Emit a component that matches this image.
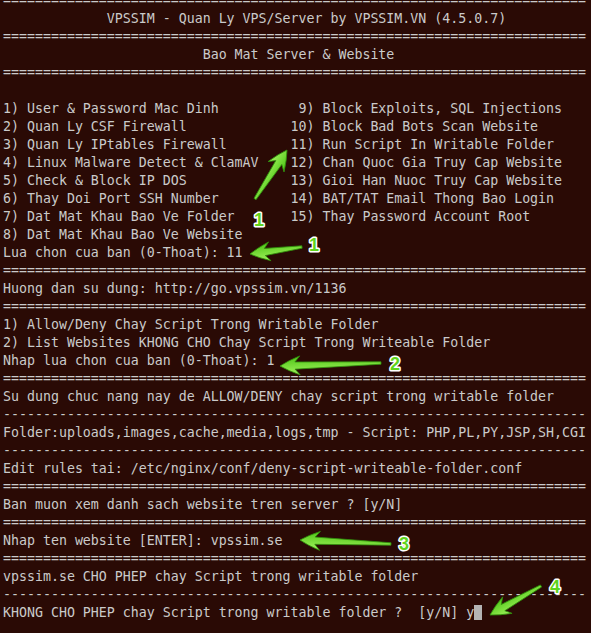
import React from "react";

const EQ = "=".repeat(73);
const DASH = "-".repeat(73);

const left = [
  "1) User & Password Mac Dinh",
  "2) Quan Ly CSF Firewall",
  "3) Quan Ly IPtables Firewall",
  "4) Linux Malware Detect & ClamAV",
  "5) Check & Block IP DOS",
  "6) Thay Doi Port SSH Number",
  "7) Dat Mat Khau Bao Ve Folder",
  "8) Dat Mat Khau Bao Ve Website",
];
const right = [
  " 9) Block Exploits, SQL Injections",
  "10) Block Bad Bots Scan Website",
  "11) Run Script In Writable Folder",
  "12) Chan Quoc Gia Truy Cap Website",
  "13) Gioi Han Nuoc Truy Cap Website",
  "14) BAT/TAT Email Thong Bao Login",
  "15) Thay Password Account Root",
];

const lines = [
  EQ,
  " ".repeat(13) + "VPSSIM - Quan Ly VPS/Server by VPSSIM.VN (4.5.0.7)",
  EQ,
  " ".repeat(25) + "Bao Mat Server & Website",
  EQ,
  "",
  ...left.map((l, i) => l.padEnd(36, " ") + (right[i] || "")),
  "Lua chon cua ban (0-Thoat): 11",
  EQ,
  "Huong dan su dung: http://go.vpssim.vn/1136",
  EQ,
  "1) Allow/Deny Chay Script Trong Writable Folder",
  "2) List Websites KHONG CHO Chay Script Trong Writeable Folder",
  "Nhap lua chon cua ban (0-Thoat): 1",
  EQ,
  "Su dung chuc nang nay de ALLOW/DENY chay script trong writable folder",
  DASH,
  "Folder:uploads,images,cache,media,logs,tmp - Script: PHP,PL,PY,JSP,SH,CGI",
  DASH,
  "Edit rules tai: /etc/nginx/conf/deny-script-writeable-folder.conf",
  EQ,
  "Ban muon xem danh sach website tren server ? [y/N]",
  EQ,
  "Nhap ten website [ENTER]: vpssim.se",
  EQ,
  "vpssim.se CHO PHEP chay Script trong writable folder",
  DASH,
  "KHONG CHO PHEP chay Script trong writable folder ?  [y/N] y",
  "",
];

function Arrow({ x1, y1, x2, y2 }) {
  const dx = x2 - x1;
  const dy = y2 - y1;
  const L = Math.sqrt(dx * dx + dy * dy);
  const a = (Math.atan2(dy, dx) * 180) / Math.PI;
  const d = `M 0 -1.2 L ${L - 15} -3.6 L ${L - 20} -9.5 Q ${L - 8} -5 ${L} 0 Q ${L - 8} 5 ${L - 20} 9.5 L ${L - 15} 3.6 L 0 1.2 Z`;
  return (
    <path
      d={d}
      transform={`translate(${x1} ${y1}) rotate(${a})`}
      fill="url(#ag)"
      stroke="#2f8d0b"
      strokeWidth="0.8"
      strokeLinejoin="round"
    />
  );
}

function Num({ x, y, t }) {
  return (
    <text
      x={x}
      y={y}
      textAnchor="middle"
      dominantBaseline="central"
      fontFamily="'Liberation Sans', Arial, sans-serif"
      fontWeight="700"
      fontSize="18"
      fill="#5fd41c"
      stroke="#ffffff"
      strokeWidth="3"
      paintOrder="stroke"
      strokeLinejoin="round"
    >
      {t}
    </text>
  );
}

export default function App() {
  return (
    <div className="relative w-[591px] h-[633px] overflow-hidden bg-[#2a0a05]">
      <div
        className="-mt-[8px] pl-[3px] whitespace-pre text-[13.28px] leading-[18px] text-[#cacaca]"
        style={{ fontFamily: "'DejaVu Sans Mono', 'Liberation Mono', monospace" }}
      >
        {lines.map((l, i) => (
          <div key={i} className="h-[18px]">
            {l}
            {i === 34 && (
              <span className="inline-block w-[8px] h-[15px] align-[-3px] bg-[#b4b4b4]" />
            )}
          </div>
        ))}
      </div>
      <svg
        className="absolute left-0 top-0 pointer-events-none"
        width="591"
        height="633"
        viewBox="0 0 591 633"
      >
        <defs>
          <linearGradient id="ag" x1="0" y1="0" x2="0" y2="1">
            <stop offset="0" stopColor="#a2f35e" />
            <stop offset="1" stopColor="#4dc414" />
          </linearGradient>
        </defs>
        <Arrow x1={255} y1={199} x2={287} y2={150} />
        <Arrow x1={302} y1={247} x2={250} y2={254} />
        <Arrow x1={381} y1={363} x2={280} y2={366} />
        <Arrow x1={391} y1={544} x2={300} y2={540} />
        <Arrow x1={541} y1={586} x2={490} y2={615} />
        <Num x={259} y={220} t="1" />
        <Num x={314} y={245} t="1" />
        <Num x={395} y={364} t="2" />
        <Num x={404} y={544} t="3" />
        <Num x={555} y={587} t="4" />
      </svg>
    </div>
  );
}
